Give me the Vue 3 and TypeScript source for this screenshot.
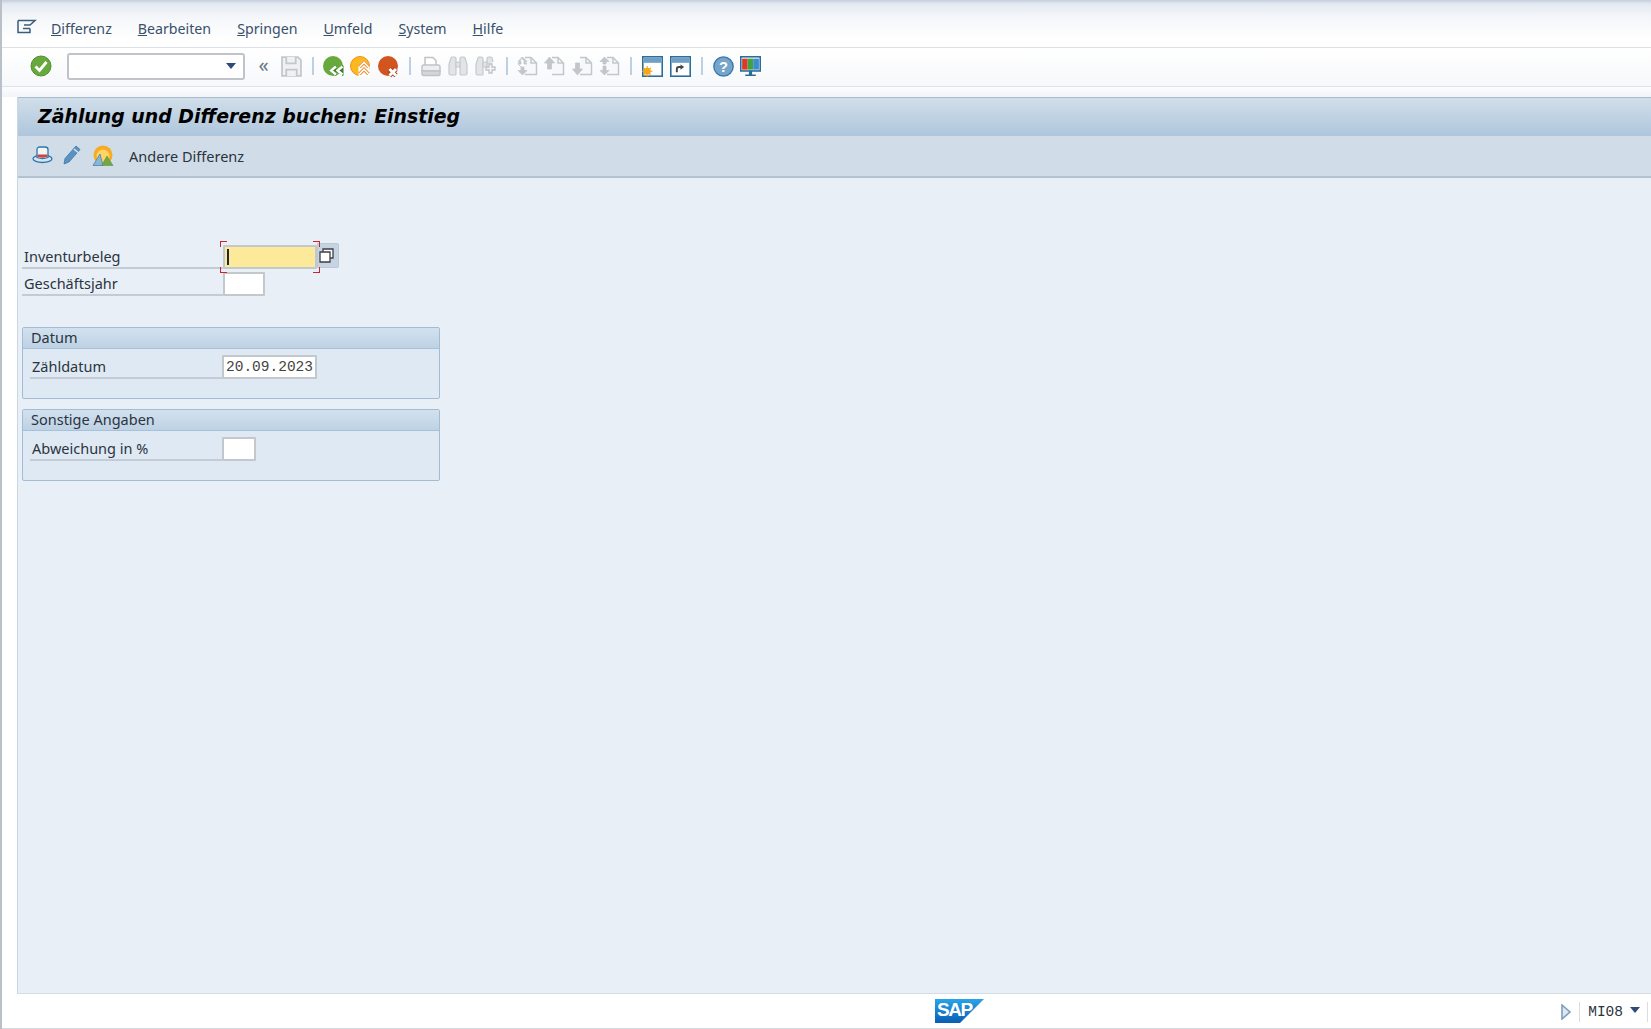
<script setup lang="ts">
const menus: { key: string; rest: string }[] = [
  { key: 'D', rest: 'ifferenz' },
  { key: 'B', rest: 'earbeiten' },
  { key: 'S', rest: 'pringen' },
  { key: 'U', rest: 'mfeld' },
  { key: 'S', rest: 'ystem' },
  { key: 'H', rest: 'ilfe' }
]
const docArrows: string[] = [
  'M5.500 1L1 5.500h3V8H1l4.500 4.500L1 8zM5.500 1L10 5.500H7V8h3L5.500 3zM5.500 19L1 14.500h3V11H7v3.500h3z',
  'M5.500 1L.5 7h3v6h4V7h3z',
  'M5.500 19L.5 13h3V7h4v6h3z',
  'M5.500 1L1 5.500h3v2.500h3V5.500h3zM5.500 19L1 14.500h3V10h3v4.500h3z'
]
</script>

<template>
  <div class="page">
    <header class="menubar">
      <svg class="menu-icon" width="20" height="16" viewBox="0 0 20 16" fill="none" stroke="#3d5b7a" stroke-width="1.5">
        <path d="M1 1.5h17l-5 4.500H7M1 1.500v12h12v-4M6 9.500h7" />
      </svg>
      <nav class="menus">
        <span v-for="m in menus" :key="m.key + m.rest" class="menu"><u>{{ m.key }}</u>{{ m.rest }}</span>
      </nav>
    </header>

    <div class="toolbar">
      <span class="slot"><svg width="22" height="22" viewBox="0 0 22 22"><circle cx="11" cy="11" r="10" fill="#68a93e" stroke="#4f8f2e"/><path d="M5.500 11.500l4 4 7-8.500" fill="none" stroke="#fff" stroke-width="2.800"/></svg></span>
      <div class="combo"><span class="caret"></span></div>
      <span class="chev">«</span>
      <span class="slot">
        <svg width="21" height="21" viewBox="0 0 20 20" fill="#eff1f3" stroke="#c3c7cb" stroke-width="1.700"><path d="M1 1h15l3 3v15H1z"/><path d="M5 1v6h9V1M5 19v-6h10v6"/></svg>
      </span>
      <span class="sep"></span>
      <span class="slot">
        <svg width="23" height="23" viewBox="0 0 23 23"><circle cx="10" cy="11" r="10" fill="#68a93e"/><path d="M6 15.500l7-5v10zM13 15.500l7-5v10z" fill="#3f7f28" stroke="#3f7f28" stroke-width="1" stroke-linejoin="round"/><path d="M13 11.500l-5 4 5 4M19.500 11.500l-5 4 5 4" fill="none" stroke="#fff" stroke-width="2.400"/></svg>
      </span>
      <span class="slot">
        <svg width="23" height="23" viewBox="0 0 23 23"><circle cx="10" cy="11" r="9.500" fill="#fbb91f" stroke="#ef8f1f"/><path d="M8.500 22V11l5.500-6 5.500 6v11z" fill="#fff"/><path d="M9.500 12l4.500-4.500 4.500 4.500M9.500 19l4.500-4.500 4.500 4.500" fill="none" stroke="#ee8a28" stroke-width="3.400"/><path d="M9.500 12l4.500-4.500 4.500 4.500M9.500 19l4.500-4.500 4.500 4.500" fill="none" stroke="#fff" stroke-width="1.600"/></svg>
      </span>
      <span class="slot">
        <svg width="23" height="23" viewBox="0 0 23 23"><circle cx="10" cy="11" r="10" fill="#d2541f"/><path d="M11.500 14l6.500 6.500M18 14l-6.500 6.500" stroke="#a8401a" stroke-width="4.600"/><path d="M11.500 14l6.500 6.500M18 14l-6.500 6.500" stroke="#fff" stroke-width="3"/></svg>
      </span>
      <span class="sep narrow"></span>
      <span class="slot">
        <svg width="20" height="21" viewBox="0 0 20 21" fill="#eceef0" stroke="#c0c4c8" stroke-width="1.500"><path d="M4 9V1.500h8l3 3V9" fill="#fff"/><path d="M1 11a2 2 0 0 1 2-2h14a2 2 0 0 1 2 2v4H1z"/><path d="M1 15h18v3a1.500 1.500 0 0 1-1.500 1.500h-15A1.500 1.500 0 0 1 1 18z" fill="#d3d6d9"/></svg>
      </span>
      <span class="slot">
        <svg width="20" height="20" viewBox="0 0 20 20" fill="#e2e4e6" stroke="#c6c9cd" stroke-width="1.200"><path d="M2.500 19a1.500 1.500 0 0 1-1.500-1.500V8l2-6a1.500 1.500 0 0 1 1.500-1h2A1.500 1.500 0 0 1 8 2.500V18a1 1 0 0 1-1 1z"/><path d="M17.500 19a1.500 1.500 0 0 0 1.500-1.500V8l-2-6a1.500 1.500 0 0 0-1.500-1h-2A1.500 1.500 0 0 0 12 2.500V18a1 1 0 0 0 1 1z"/><path d="M8 6h4v5H8z"/></svg>
      </span>
      <span class="slot">
        <svg width="21" height="20" viewBox="0 0 21 20" fill="#e2e4e6" stroke="#c6c9cd" stroke-width="1.200"><path d="M2.500 19a1.500 1.500 0 0 1-1.500-1.500V8l2-6a1.500 1.500 0 0 1 1.500-1h2A1.500 1.500 0 0 1 8 2.500V18a1 1 0 0 1-1 1z"/><path d="M12 9V2.500A1.500 1.500 0 0 1 13.500 1h2A1.500 1.500 0 0 1 17 2l1 4"/><path d="M8 6h4v5H8z"/><path d="M14 8h3v3h3v3h-3v3h-3v-3h-3v-3h3z" fill="#f4f5f6" stroke="#bfc3c7" stroke-width="1.300"/></svg>
      </span>
      <span class="sep narrow"></span>
      <span class="slot" v-for="(d, i) in docArrows" :key="i">
        <svg width="21" height="20" viewBox="0 0 21 20"><path d="M8 1.500h6l5.500 5.500v11.500H8" fill="#f7f8f9" stroke="#c3c7cb" stroke-width="1.500"/><path d="M14 1.500V7h5.500" fill="none" stroke="#c3c7cb" stroke-width="1.500"/><path :d="d" fill="#c2c6ca" stroke="#c2c6ca" stroke-width=".8"/></svg>
      </span>
      <span class="sep"></span>
      <span class="slot">
        <svg width="21" height="21" viewBox="0 0 20 20"><rect x=".75" y=".75" width="18.500" height="18.500" fill="#fff" stroke="#2b6c9b" stroke-width="1.500"/><rect x="1.500" y="1.500" width="17" height="5" fill="#6f9fc4"/><circle cx="5" cy="14.500" r="3.400" fill="#f7a818"/><path d="M5 9.500v10M0 14.500h10M1.500 11l7 7M8.500 11l-7 7" stroke="#f7a818" stroke-width="1.100"/></svg>
      </span>
      <span class="slot">
        <svg width="21" height="21" viewBox="0 0 20 20"><rect x=".75" y=".75" width="18.500" height="18.500" fill="#fff" stroke="#2b6c9b" stroke-width="1.500"/><rect x="1.500" y="1.500" width="17" height="5" fill="#6f9fc4"/><path d="M6.500 15.500v-3a2 2 0 0 1 2-2h2" fill="none" stroke="#444" stroke-width="1.800"/><path d="M10 8l3.500 2.500L10 13z" fill="#444"/></svg>
      </span>
      <span class="sep"></span>
      <span class="slot">
        <svg width="21" height="21" viewBox="0 0 20 20"><circle cx="10" cy="10" r="9.200" fill="#76a5cc" stroke="#3b78a8" stroke-width="1.300"/><text x="10" y="15" text-anchor="middle" class="help">?</text></svg>
      </span>
      <span class="slot">
        <svg width="21" height="21" viewBox="0 0 20 20"><rect x=".75" y=".75" width="18.500" height="13.500" fill="#fff" stroke="#2b6c9b" stroke-width="1.500"/><rect x="2" y="2.500" width="5.300" height="10.500" fill="#d93b2b"/><rect x="7.300" y="2.500" width="5.300" height="10.500" fill="#3fa33f"/><rect x="12.600" y="2.500" width="5.400" height="10.500" fill="#3a8bd0"/><path d="M8.500 14v3.500h3V14zM5 17.500h10v1.500H5z" fill="#2b6c9b"/></svg>
      </span>
    </div>

    <div class="strip"></div>

    <main class="workarea">
      <div class="title">Zählung und Differenz buchen: Einstieg</div>
      <div class="apptools">
        <svg class="at1" width="21" height="18" viewBox="0 0 21 18" fill="none" stroke="#2f76a8" stroke-width="1.300"><ellipse cx="10.500" cy="12.800" rx="9.500" ry="3.700" fill="#d4e4f0"/><path d="M5 11.500V3.500Q5 1 8 1h5q3 0 3 2.500v8q-5.500 2.200-11 0z" fill="#eef4f9"/><path d="M5.500 8.500h10v2.300q-5 1.800-10 0z" fill="#c8473f" stroke="none"/></svg>
        <svg class="at2" width="18" height="20" viewBox="0 0 18 20"><path d="M13 1l4 3.500L6 17l-5 2 1-5.500z" fill="#5a93c2" stroke="#3c77a6" stroke-width=".8"/><path d="M11 4l4 3.500" stroke="#dfeaf3" stroke-width="1.300"/></svg>
        <svg class="at3" width="22" height="21" viewBox="0 0 22 21"><circle cx="11" cy="10" r="9.500" fill="#f6ac25"/><circle cx="11" cy="11" r="6.500" fill="#fdd566"/><path d="M0 21h22v-4H0z" fill="#d0dde8"/><path d="M1 20.500L8 9l3 11.500z" fill="#8cb4d6" stroke="#4a83b0" stroke-width=".8"/><path d="M9.500 20.500L15 11l6 9.500z" fill="#72a743" stroke="#55883a" stroke-width=".5"/></svg>
        <span class="other">Andere Differenz</span>
      </div>

      <section class="form">
        <div class="field first">
          <label class="label">Inventurbeleg</label>
          <span class="req">
            <span class="input active"><i class="cursor"></i></span>
            <span class="ck tl"></span><span class="ck tr"></span><span class="ck bl"></span><span class="ck br"></span>
          </span>
          <span class="f4">
            <svg width="15" height="15" viewBox="0 0 15 15" fill="#fff" stroke="#3a3f46" stroke-width="1.300"><path d="M4 1h10v9H4z"/><path d="M1 4h10v10H1z"/></svg>
          </span>
        </div>
        <div class="field">
          <label class="label">Geschäftsjahr</label>
          <span class="input w4"></span>
        </div>

        <div class="group g1">
          <div class="ghead">Datum</div>
          <div class="gbody">
            <div class="field">
              <label class="label inner">Zähldatum</label>
              <span class="input w10 mono">20.09.2023</span>
            </div>
          </div>
        </div>

        <div class="group g2">
          <div class="ghead">Sonstige Angaben</div>
          <div class="gbody">
            <div class="field">
              <label class="label inner">Abweichung in %</label>
              <span class="input w3"></span>
            </div>
          </div>
        </div>
      </section>
    </main>

    <footer class="status">
      <span class="logo">
        <svg width="49" height="24" viewBox="0 0 49 24"><defs><linearGradient id="sapg" x1="0" y1="0" x2="0" y2="1"><stop offset="0" stop-color="#29a5e8"/><stop offset="1" stop-color="#0a5cb4"/></linearGradient></defs><path d="M0 0h49L25 24H0z" fill="url(#sapg)"/><text x="2" y="16.500" class="sap">SAP</text></svg>
      </span>
      <span class="status-right">
        <svg width="10" height="16" viewBox="0 0 10 16"><path d="M1 1l8 7-8 7z" fill="#dde7f0" stroke="#7d9fbe" stroke-width="1.600"/></svg>
        <span class="vline"></span>
        <span class="tcode">MI08</span>
        <span class="caret small"></span>
        <span class="vline last"></span>
      </span>
    </footer>
  </div>
</template>

<style>
html, body { margin: 0; background: #fff; }
</style>

<style scoped>
.page {
  width: 1651px;
  height: 1029px;
  overflow: hidden;
  display: flex;
  flex-direction: column;
  font-family: "Noto Sans", "Liberation Sans", sans-serif;
  font-size: 14.500px;
  color: #2b3440;
  background: #fff;
  border-left: 2px solid #b9c0c8;
  box-sizing: border-box;
}
.menubar {
  height: 48px;
  flex: none;
  box-sizing: border-box;
  padding: 18px 0 0 15px;
  display: flex;
  align-items: flex-start;
  border-bottom: 1px solid #dbe0e6;
  background: linear-gradient(#c4cfdc 0, #e4eaf1 4px, #f3f6f9 16px, #fff 40px);
}
.menu-icon { flex: none; margin-top: 1px; }
.menus { display: flex; gap: 26px; margin-left: 14px; margin-top: 2px; font-size: 14.200px; }
.menu { color: #39506b; line-height: 18px; }
.toolbar {
  height: 39px;
  flex: none;
  box-sizing: border-box;
  display: flex;
  align-items: center;
  padding: 0 0 2px 25px;
  border-bottom: 1px solid #dde2e8;
  background: linear-gradient(#fff, #f6f8fa);
}
.slot { width: 27.500px; height: 24px; flex: none; display: flex; align-items: center; justify-content: center; }
.sep { width: 2px; height: 18px; flex: none; margin: 0 6.750px; background: #bcd0e1; }
.sep.narrow { margin: 0 6px; }
.combo {
  width: 178px;
  height: 27px;
  flex: none;
  box-sizing: border-box;
  margin-left: 12px;
  position: relative;
  background: #fff;
  border: 2px solid #c0c4c9;
  border-radius: 3px;
}
.caret {
  position: absolute;
  right: 7px;
  top: 8px;
  border-left: 5px solid transparent;
  border-right: 5px solid transparent;
  border-top: 6px solid #2f4a78;
}
.caret.small { position: static; display: inline-block; margin-left: 7px; margin-top: -4px; }
.chev { width: 26px; margin-left: 6px; margin-right: 1px; text-align: center; font-size: 20px; line-height: 22px; color: #6c7683; flex: none; margin-top: -3px; }
.help { font: bold 14px "Liberation Sans", sans-serif; fill: #fff; }
.strip { height: 10px; flex: none; background: linear-gradient(#fbfcfd, #f2f5f8); }
.workarea {
  flex: 1;
  min-height: 0;
  margin-left: 15px;
  background: #e8eff6;
  display: flex;
  flex-direction: column;
  border-left: 1px solid #ccd6e0;
  border-bottom: 1px solid #d4dbe2;
}
.title {
  height: 39px;
  flex: none;
  box-sizing: border-box;
  padding: 3px 0 0 20px;
  font: italic bold 18.900px/30px "DejaVu Sans", sans-serif;
  color: #000;
  white-space: nowrap;
  border-top: 1px solid #a8bccf;
  background: linear-gradient(#d1deea, #aec6dc);
}
.apptools {
  height: 42px;
  flex: none;
  box-sizing: border-box;
  display: flex;
  align-items: center;
  padding: 0 0 2px 14px;
  background: #d0dde8;
  border-bottom: 2px solid #b4c2d0;
}
.at2 { margin-left: 10px; }
.at3 { margin-left: 11px; }
.other { margin-left: 15px; color: #2b3440; position: relative; top: 1px; }
.form { padding: 67px 0 0 4px; width: 422px; box-sizing: border-box; }
.field { display: flex; height: 27px; align-items: flex-start; }
.label {
  width: 201px;
  height: 23px;
  box-sizing: border-box;
  flex: none;
  padding-left: 2px;
  line-height: 21px;
  border-bottom: 2px solid #c4cbd2;
  margin-top: 1px;
  white-space: nowrap;
}
.label.inner { width: 192px; padding-left: 2px; margin-left: 7px; margin-top: 1px; }
.input {
  height: 24px;
  box-sizing: border-box;
  flex: none;
  display: block;
  background: #fff;
  border: 2px solid #c3c8cd;
  border-radius: 1px;
}
.active {
  width: 94px;
  background: #fde99a;
  position: relative;
}
.cursor { position: absolute; left: 2px; top: 2px; width: 2px; height: 16px; background: #1d2742; }
.req { position: relative; flex: none; }
.ck { position: absolute; width: 6px; height: 5px; border: 0 solid #c8262c; }
.tl { left: -3px; top: -4px; border-width: 1.500px 0 0 1.500px; }
.tr { right: -3px; top: -4px; border-width: 1.500px 1.500px 0 0; }
.bl { left: -3px; bottom: -4px; border-width: 0 0 1.500px 1.500px; }
.br { right: -3px; bottom: -4px; border-width: 0 1.500px 1.500px 0; }
.f4 {
  width: 22px;
  height: 25px;
  flex: none;
  margin-top: -2px;
  box-sizing: border-box;
  display: flex;
  align-items: center;
  justify-content: center;
  padding-right: 3px;
  background: #c6d3e0;
  border: 1px solid #bcc8d4;
  border-radius: 0 2px 2px 0;
}
.w3 { width: 34px; }
.w4 { width: 42px; }
.w10 { width: 95px; }
.mono {
  font: 14.500px/20px "Liberation Mono", monospace;
  color: #444;
  padding-left: 2px;
  white-space: nowrap;
}
.group { border: 1px solid #a3bcd3; border-radius: 2px; box-sizing: border-box; height: 72px; background: #dfe9f3; }
.g1 { margin-top: 28px; }
.g2 { margin-top: 10px; }
.ghead {
  height: 21px;
  box-sizing: border-box;
  padding-left: 8px;
  line-height: 18px;
  background: linear-gradient(#d3e1ee, #bdd2e5);
  border-bottom: 1px solid #a9c1d7;
}
.gbody { padding-top: 6px; }
.status {
  height: 35px;
  flex: none;
  position: relative;
  display: flex;
  align-items: center;
  justify-content: flex-end;
  background: #fff;
  border-bottom: 1px solid #d4d9de;
  box-sizing: border-box;
}
.logo { position: absolute; left: 933px; top: 5px; display: block; line-height: 0; }
.sap { font: bold 19px "Liberation Sans", sans-serif; fill: #fff; letter-spacing: -1.500px; }
.status-right { display: flex; align-items: center; margin-top: 2px; }
.vline { width: 1px; height: 20px; background: #d8dde3; margin: 0 8px; }
.vline.last { margin: 0 3px 0 7px; }
.tcode { font: 14.500px "Liberation Mono", monospace; color: #2b3440; }
</style>
